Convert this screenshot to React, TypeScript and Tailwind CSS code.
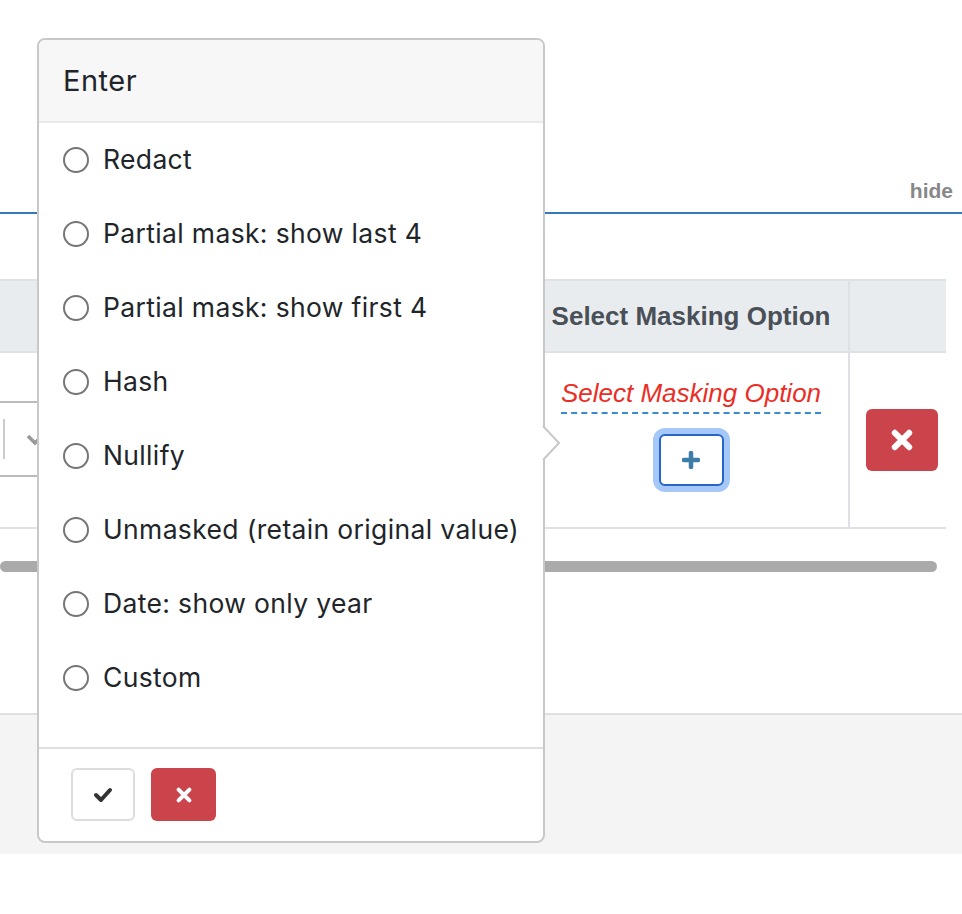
import React from "react";

const options = [
  "Redact",
  "Partial mask: show last 4",
  "Partial mask: show first 4",
  "Hash",
  "Nullify",
  "Unmasked (retain original value)",
  "Date: show only year",
  "Custom",
];

const XIcon = ({ size, stroke }: { size: number; stroke: number }) => (
  <svg width={size} height={size} viewBox="0 0 20 20">
    <path
      d="M4 4 L16 16 M16 4 L4 16"
      stroke="currentColor"
      strokeWidth={stroke}
      strokeLinecap="round"
      fill="none"
    />
  </svg>
);

export default function App() {
  return (
    <div className="relative min-h-[914px] bg-white font-['Liberation_Sans',Arial,sans-serif]">
      {/* top bar */}
      <div className="h-[214px] border-b-2 border-[#337ab7] flex items-end justify-end pr-[9px] pb-[9px]">
        <span className="text-[21px] leading-[24px] font-bold text-[#888]">hide</span>
      </div>

      {/* table */}
      <div className="pt-[65px]">
        <div className="w-[946px]">
          <div className="grid grid-cols-[543px_305px_98px] h-[74px] bg-[#e9ecef] border-y-2 border-[#dee2e6]">
            <div />
            <div className="flex items-center justify-center pr-[9px] text-[26px] font-bold text-[#495057]">
              Select Masking Option
            </div>
            <div className="border-l-2 border-[#dee2e6]" />
          </div>
          <div className="grid grid-cols-[543px_305px_98px] h-[176px] border-b-2 border-[#dee2e6]">
            <div className="relative">
              <div className="absolute left-[-300px] top-[48px] w-[350px] h-[76px] border-y-2 border-r-2 border-[#bbb] rounded-r-[5px] flex items-center">
                <div className="ml-auto h-[40px] w-[2px] bg-[#ccc] mr-[43px]" />
                <svg className="absolute right-[4px]" width="18" height="18" viewBox="0 0 18 18">
                  <path d="M2 6 L9 13 L16 6" stroke="#999" strokeWidth="3.5" fill="none" />
                </svg>
              </div>
            </div>
            <div className="flex flex-col items-center pt-[25px] pr-[9px]">
              <span className="text-[26px] leading-[30px] italic text-[#ea2e25] border-b-2 border-dashed border-[#3a8ad0] pb-[4px]">
                Select Masking Option
              </span>
              <button className="mt-[20px] w-[65px] h-[52px] rounded-[6px] border-2 border-[#2566c8] ring-[6px] ring-[#a6c8f8] bg-white flex items-center justify-center text-[#3d7da8]">
                <svg width="18" height="18" viewBox="0 0 18 18">
                  <path d="M9 2 V16 M2 9 H16" stroke="currentColor" strokeWidth="4.5" strokeLinecap="round" />
                </svg>
              </button>
            </div>
            <div className="border-l-2 border-[#dee2e6] flex items-center justify-end">
              <button className="mr-[8px] w-[72px] h-[62px] rounded-[6px] bg-[#cc444b] text-white flex items-center justify-center">
                <XIcon size={24} stroke={5} />
              </button>
            </div>
          </div>
        </div>
        <div className="mt-[32px] w-[937px] h-[11px] rounded-full bg-[#aaa]" />
      </div>

      {/* bottom band */}
      <div className="mt-[141px] h-[141px] border-t-2 border-[#e0e0e0] bg-[#f4f4f4]" />

      {/* popover */}
      <div className="absolute left-[37px] top-[38px] w-[508px] h-[805px] bg-white border-2 border-[#c8c8c8] rounded-[8px] flex flex-col font-['Inter',sans-serif]">
        <div className="h-[83px] bg-[#f7f7f7] border-b-2 border-[#e9e9e9] rounded-t-[6px] flex items-center px-[24px]">
          <span className="text-[29px] tracking-[0.5px] text-[#212529]">Enter</span>
        </div>
        <div className="flex-1 flex flex-col">
          {options.map((opt) => (
            <label key={opt} className="h-[74px] flex items-center pl-[24px] gap-[14px]">
              <span className="w-[26px] h-[26px] rounded-full border-2 border-[#767676] bg-white shrink-0" />
              <span className="text-[26.5px] tracking-[0.35px] text-[#212529]">{opt}</span>
            </label>
          ))}
        </div>
        <div className="border-t-2 border-[#dedede] pt-[19px] pb-[20px] px-[32px] flex gap-[16px]">
          <button className="w-[64px] h-[53px] rounded-[6px] border-2 border-[#ddd] bg-white flex items-center justify-center text-[#333]">
            <svg width="20" height="18" viewBox="0 0 20 18">
              <path d="M3 9 L8 14 L17 4" stroke="currentColor" strokeWidth="4" strokeLinecap="round" strokeLinejoin="round" fill="none" />
            </svg>
          </button>
          <button className="w-[65px] h-[53px] rounded-[6px] bg-[#cc444b] text-white flex items-center justify-center">
            <XIcon size={18} stroke={4.5} />
          </button>
        </div>
        {/* arrow */}
        <svg className="absolute left-[503px] top-[385px]" width="20" height="36" viewBox="0 0 20 36">
          <polygon points="0,1 17,18 0,35" fill="white" />
          <polyline points="1,1 17,18 1,35" fill="none" stroke="#c8c8c8" strokeWidth="2" />
        </svg>
      </div>
    </div>
  );
}
